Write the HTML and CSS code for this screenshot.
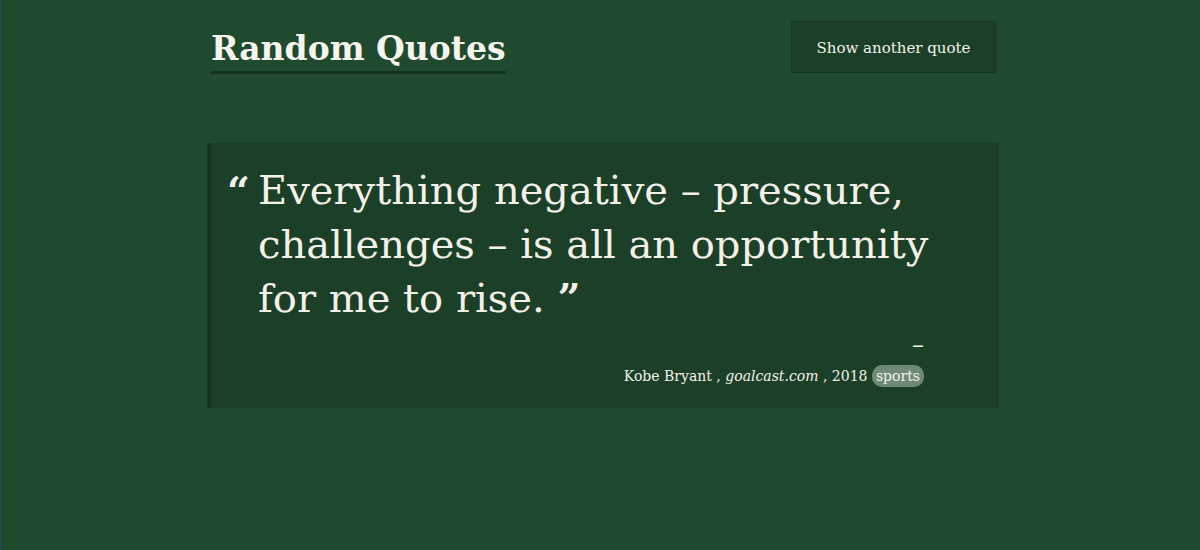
FILE: index.html
```html
<!DOCTYPE html>
<html>
<head>
<meta charset="utf-8">
<link rel="stylesheet" href="styles.css">
</head>
<body>
<div class="page">
  <header class="header">
    <h1 class="title">Random Quotes</h1>
    <button class="btn">Show another quote</button>
  </header>
  <section class="quote-box">
    <blockquote class="quote">
      <span class="open-mark">“</span>
      <p class="quote-text">Everything negative – pressure, challenges – is all an opportunity for me to rise. <b class="close-mark">”</b></p>
    </blockquote>
    <div class="attribution">
      <div class="dash">–</div>
      <div class="source">Kobe Bryant , <em>goalcast.com</em> , 2018 <span class="tag">sports</span></div>
    </div>
  </section>
</div>
</body>
</html>
```
FILE: styles.css
```css
html, body {
  margin: 0;
  padding: 0;
}
body {
  background: #1f4a2d;
  color: #f3f1ea;
  font-family: "DejaVu Serif", "Liberation Serif", serif;
  height: 550px;
  border-left: 1px solid #2a4a5a;
  box-sizing: border-box;
}
.page {
  width: 792px;
  margin-left: 206px;
}
.header {
  display: flex;
  justify-content: space-between;
  align-items: flex-start;
  padding: 21px 3px 0 4px;
}
.title {
  margin: 8px 0 0 0;
  font-size: 33px;
  font-weight: bold;
  line-height: 40px;
  padding-bottom: 2px;
  border-bottom: 3px solid #143220;
  color: #f6f4ee;
}
.btn {
  width: 205px;
  height: 52px;
  padding-top: 3px;
  background: #1b4027;
  border: 1px solid #153320;
  border-radius: 2px;
  color: #f3f1ea;
  font-family: "DejaVu Serif", "Liberation Serif", serif;
  font-size: 15px;
  cursor: pointer;
}
.quote-box {
  margin-top: 69px;
  background: #1b4027;
  border-left: 4px solid #143220;
  padding: 21px 58px 21px 16px;
}
.quote {
  display: flex;
  margin: 0;
}
.open-mark {
  width: 31px;
  flex: none;
  font-size: 40px;
  font-weight: bold;
  line-height: 53px;
}
.quote-text {
  margin: 0;
  font-size: 40px;
  line-height: 53.5px;
  color: #f3f1ea;
}
.close-mark {
  font-weight: bold;
}
.attribution {
  text-align: right;
  font-size: 14px;
  margin-top: 11px;
  padding-right: 17px;
}
.dash {
  font-size: 24px;
  line-height: 16px;
}
.source {
  margin-top: 12px;
  line-height: 22px;
}
.source em {
  font-style: italic;
}
.tag {
  display: inline-block;
  background: #6e8a76;
  border-radius: 10px;
  padding: 0 4px;
  line-height: 22px;
}
```
